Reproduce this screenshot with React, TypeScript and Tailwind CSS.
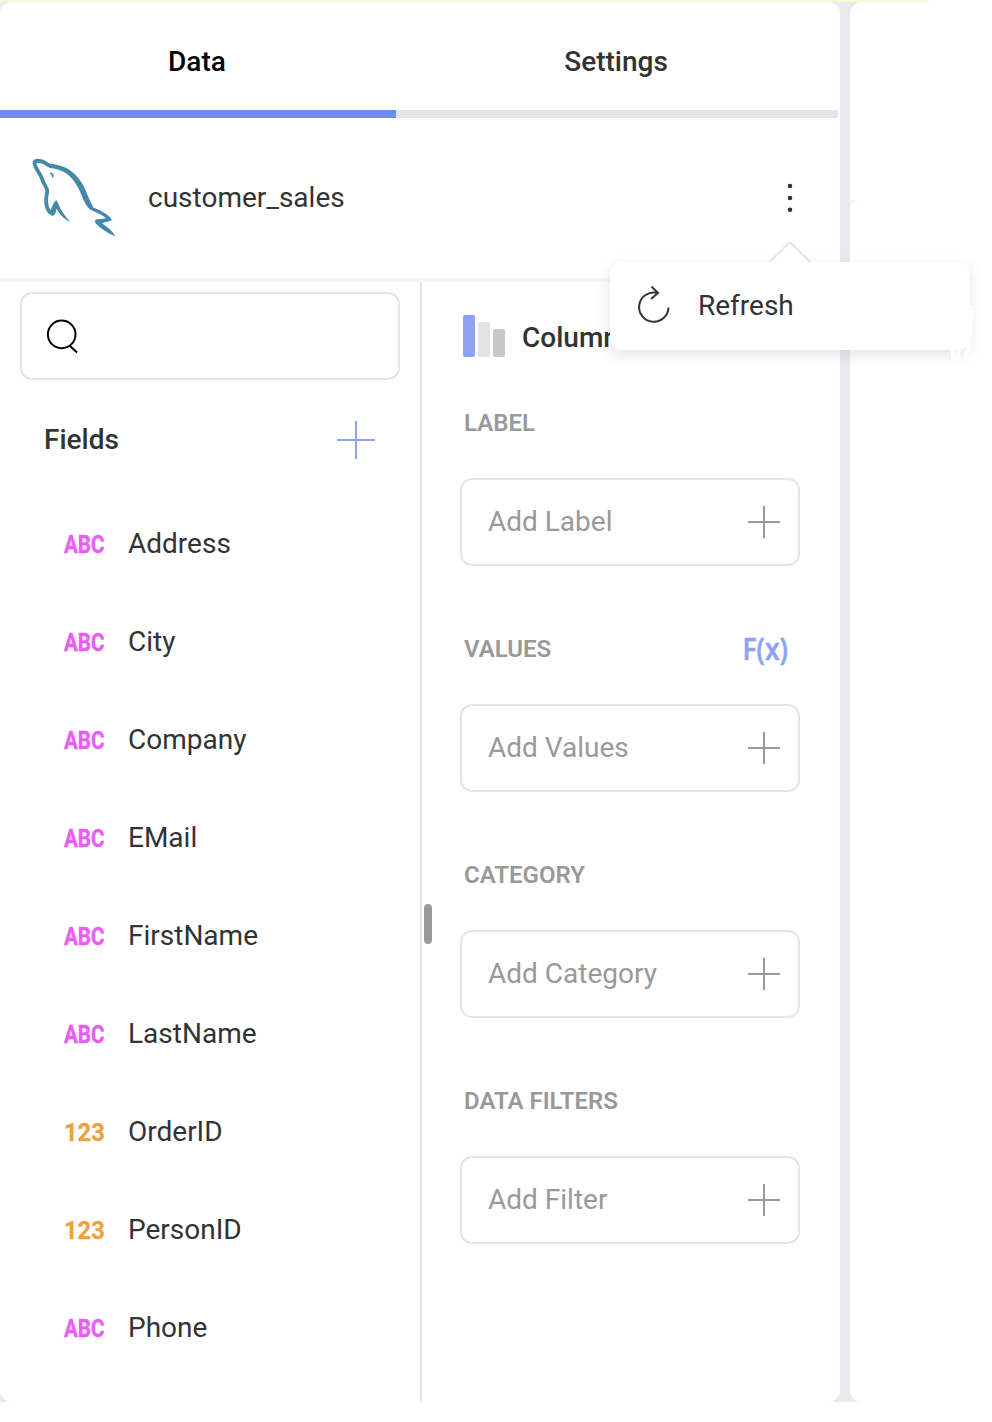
import React from "react";

const fields = [
  { type: "ABC", name: "Address" },
  { type: "ABC", name: "City" },
  { type: "ABC", name: "Company" },
  { type: "ABC", name: "EMail" },
  { type: "ABC", name: "FirstName" },
  { type: "ABC", name: "LastName" },
  { type: "123", name: "OrderID" },
  { type: "123", name: "PersonID" },
  { type: "ABC", name: "Phone" },
];

const sections = [
  { title: "LABEL", placeholder: "Add Label", formula: false },
  { title: "VALUES", placeholder: "Add Values", formula: true },
  { title: "CATEGORY", placeholder: "Add Category", formula: false },
  { title: "DATA FILTERS", placeholder: "Add Filter", formula: false },
];

function Plus({ className, size }: { className: string; size: number }) {
  const c = size / 2;
  return (
    <svg className={className} width={size} height={size} viewBox={`0 0 ${size} ${size}`} fill="none" stroke="currentColor" strokeWidth="2">
      <path d={`M${c} 0V${size}M0 ${c}H${size}`} />
    </svg>
  );
}

function Dolphin() {
  return (
    <svg width="90" height="84" viewBox="30 156 90 84" fill="none" stroke="#4489aa" strokeLinecap="round" strokeLinejoin="round">
      <path strokeWidth="3.8" d="M52.500 213.500 C47 212 44.500 203 47.300 191.500 C47.700 188 44.500 186 42.500 180 C40.500 173 35.500 169.500 34.400 163.500 C34.300 159.500 40.500 160.500 44.500 162.500 C47.500 164.500 48 165.500 51 165.900" />
      <path fill="#4489aa" stroke="none" d="M49 163.700 C64 164.500 75 171 82.500 184 C86.500 191 89 200 93 206.500 L90 209.500 C84.500 205 82.500 196 78 187.500 C71 175 63 168.800 49 168 Z" />
      <path strokeWidth="3.4" d="M91 207.800 C95.500 211 104 212.500 109.500 219.300 L97 222" />
      <path fill="#4489aa" stroke="none" d="M96 219.500 L108 218.300 L112.500 220 L102 223 C105 226 112 229.500 115.500 236.500 C109 233.500 100 228.500 96 223.500 C94.500 221.500 95 220 96 219.500Z" />
      <path fill="#4489aa" stroke="none" d="M56.300 200 C59 204 60 211 70 221.500 C64.500 220 59.500 214 56.500 208.500 C56 213 54.500 216 51.500 215.800 C48.500 214.500 52 204 56.300 200Z" />
      <path fill="#4489aa" stroke="none" d="M50 172.500 C53 172.500 54.800 175 53 177.800 C51.500 177.500 52.500 174.800 50 173.800Z" />
    </svg>
  );
}

function RefreshIcon() {
  return (
    <svg width="34" height="40" viewBox="0 0 34 40" fill="none" stroke="#333" strokeWidth="2">
      <path d="M31.500 21.500 A14.700 14.700 0 1 1 20 6.800" />
      <path d="M14.500 0.500L21 7L14 13" />
    </svg>
  );
}

function TypeBadge({ type }: { type: string }) {
  const isText = type === "ABC";
  const color = isText ? "#ea5cf5" : "#f0a03c";
  return (
    <svg className="ml-10 overflow-visible" width="48" height="36" viewBox="0 0 48 36">
      <text
        x="4"
        y="27.300"
        textLength={isText ? 40.5 : 40.8}
        lengthAdjust="spacingAndGlyphs"
        className="font-bold"
        fontSize="26.500"
        fill={color}
        stroke={color}
        strokeWidth={isText ? 0.4 : 0.3}
      >
        {type}
      </text>
    </svg>
  );
}

function FieldList() {
  return (
    <aside className="w-[420px] px-5 pt-2.5">
      <div className="flex h-[88px] items-center rounded-xl border-2 border-[#e5e5e5] pl-6">
        <svg width="34" height="36" viewBox="0 0 34 36" fill="none" stroke="#000" strokeWidth="2">
          <circle cx="15.700" cy="16.400" r="13.800" />
          <path d="M23.500 27.500L31 34.500" />
        </svg>
      </div>
      <div className="flex h-[120px] items-center justify-between pr-[25px] pl-6">
        <h2 className="font-medium">Fields</h2>
        <Plus size={38} className="text-[#8da2f3]" />
      </div>
      <ul className="-mt-[5px]">
        {fields.map((field) => (
          <li key={field.name} className="flex h-[98px] items-center">
            <TypeBadge type={field.type} />
            <span className="ml-5">{field.name}</span>
          </li>
        ))}
      </ul>
    </aside>
  );
}

function Bindings() {
  return (
    <section className="flex flex-1 border-l-2 border-[#e5e5e5]">
      <div className="mt-[622px] ml-0.5 h-10 w-2 shrink-0 self-start rounded-sm bg-[#999]" />
      <div className="ml-7 w-[340px]">
        <div className="flex h-[110px] items-center">
          <svg className="mb-0.5 ml-[3px] shrink-0" width="42" height="42" viewBox="0 0 42 42">
            <rect width="12" height="42" rx="2" fill="#8da2f3" />
            <rect x="15" y="7" width="12" height="35" rx="2" fill="#e3e3e3" />
            <rect x="30" y="14" width="12" height="28" rx="2" fill="#c8c8c8" />
          </svg>
          <span className="mt-0.5 ml-[17px] font-medium whitespace-nowrap">Column</span>
        </div>
        {sections.map((section) => (
          <div key={section.title} className="mb-[52px]">
            <div className="flex h-[86px] items-start justify-between pr-2 pl-1">
              <h3 className="pt-[15px] text-2xl leading-8 font-semibold text-[#999]">{section.title}</h3>
              {section.formula && (
                <svg width="52" height="50" viewBox="0 0 52 50" className="mt-1 overflow-visible">
                  <text x="2.500" y="37.700" textLength="45.500" lengthAdjust="spacingAndGlyphs" className="font-['Open_Sans',sans-serif] font-semibold" fontSize="31.500" fill="#8da2f3" stroke="#8da2f3" strokeWidth="0.600">
                    F(x)
                  </text>
                </svg>
              )}
            </div>
            <div className="flex h-[88px] items-center justify-between rounded-xl border-2 border-[#e5e5e5] pr-[18px] pl-[26px] text-[#999]">
              <span>{section.placeholder}</span>
              <Plus size={32} className="text-[#999]" />
            </div>
          </div>
        ))}
      </div>
    </section>
  );
}

function RefreshMenu() {
  return (
    <div className="absolute top-[260px] left-[610px] z-10 flex h-[88px] w-[360px] items-center rounded-xl bg-white pl-[27px] shadow-[0_5px_16px_rgba(0,0,0,0.11)]">
      <svg className="absolute -top-5 left-[158px]" width="44" height="22" viewBox="0 0 44 22" fill="#fff" stroke="#e5e5e5" strokeWidth="2">
        <path stroke="none" d="M1 22L22 1L43 22Z" />
        <path d="M1.500 20L20.500 1.500Q22 0 23.500 1.500L42.500 20" />
      </svg>
      <svg className="absolute top-10 left-[338px]" width="30" height="64" viewBox="0 0 30 64" fill="none" stroke="#fff" strokeLinecap="round" strokeLinejoin="round">
        <path strokeWidth="4" d="M22 5H24L20 48L18 54" />
        <path strokeWidth="4" d="M5 48V57M11 48L9 56" />
      </svg>
      <RefreshIcon />
      <span className="ml-[27px]">Refresh</span>
    </div>
  );
}

export default function App() {
  return (
    <div className="h-[1422px] w-[992px] overflow-hidden bg-white font-['Roboto',sans-serif] text-[28px] leading-8 text-[#333]">
      <div className="h-0.5 w-[929px] bg-[#f8f8d4]" />
      <div className="relative flex h-[1400px] gap-2.5 bg-[#e9eaf0]">
        <main className="flex w-[840px] shrink-0 flex-col rounded-xl bg-white">
          <nav className="flex h-[116px] w-[838px] text-center font-medium">
            <button className="w-[396px] border-b-8 border-[#728bee] pt-3 pr-0.5 text-black">Data</button>
            <button className="flex-1 border-b-8 border-[#e5e5e5] pt-3 pr-0.5">Settings</button>
          </nav>
          <header className="flex h-[164px] items-center border-b-4 border-[#f5f6fb] pl-[30px]">
            <Dolphin />
            <span className="ml-7 flex-1">customer_sales</span>
            <svg className="mr-12" width="4" height="30" viewBox="0 0 4 30" fill="#333" overflow="visible">
              <circle cx="2" cy="3" r="2.300" />
              <circle cx="2" cy="15" r="2.300" />
              <circle cx="2" cy="26.700" r="2.300" />
            </svg>
          </header>
          <div className="flex flex-1">
            <FieldList />
            <Bindings />
          </div>
        </main>
        <section className="w-[154px] shrink-0 rounded-l-xl bg-white pt-[198px]">
          <svg width="12" height="12" viewBox="0 0 12 12" fill="#f5f6fb">
            <path d="M0 0H10C4 0 0 4 0 10Z" />
          </svg>
        </section>
        <RefreshMenu />
      </div>
    </div>
  );
}
